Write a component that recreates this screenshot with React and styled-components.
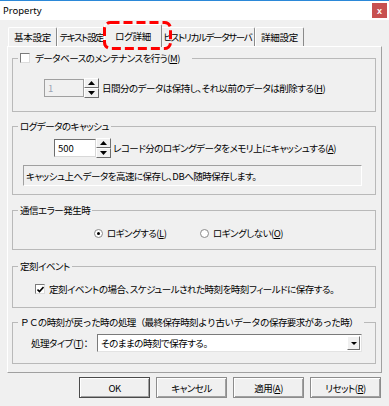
import React from "react";
import styled, { createGlobalStyle } from "styled-components";

const Global = createGlobalStyle`
  html, body { margin: 0; padding: 0; background: #f0f0f0; }
  body {
    font-family: "Noto Sans CJK JP", "Noto Sans", sans-serif;
    font-size: 9.5px;
    letter-spacing: -0.5px;
    color: #000;
    font-feature-settings: "palt" 1;
  }
  * { box-sizing: border-box; }
`;

const Window = styled.div`
  position: relative;
  width: 389px;
  height: 406px;
  overflow: hidden;
  background: #f0f0f0;
`;

const TitleBar = styled.div`
  height: 20px;
  background: #fff;
  border-top: 1px solid #2b88d8;
  display: flex;
  align-items: center;
  justify-content: space-between;
  padding: 0 2px 0 3px;
`;

const Title = styled.span`
  font-family: "Noto Sans", sans-serif;
  font-size: 9.5px;
  letter-spacing: 0;
  color: #000;
`;

const CloseBtn = styled.div`
  width: 15px;
  height: 15px;
  background: #c75050;
  color: #fff;
  display: flex;
  align-items: center;
  justify-content: center;
  font: bold 9px "Liberation Sans", sans-serif;
  letter-spacing: 0;
`;

const TabStrip = styled.div`
  height: 26px;
  display: flex;
  align-items: flex-end;
  padding-left: 8px;
`;

const Tab = styled.div`
  position: relative;
  z-index: ${(p) => (p.$active ? 2 : 1)};
  width: ${(p) => p.$w}px;
  height: ${(p) => (p.$active ? 23 : 19)}px;
  margin: 0 ${(p) => (p.$active ? -2 : 0)}px ${(p) => (p.$active ? -1 : 0)}px;
  background: #f0f0f0;
  border-top: 1px solid #fff;
  border-left: 1px solid #fff;
  border-right: 1px solid #8a8a8a;
  border-radius: 2px 2px 0 0;
  display: flex;
  align-items: center;
  justify-content: center;
  white-space: nowrap;
  letter-spacing: ${(p) => p.$ls ?? -0.3}px;
`;

const Panel = styled.div`
  margin-left: 7px;
  width: 375px;
  height: 327px;
  border-style: solid;
  border-width: 1px;
  border-color: #fff #a0a0a0 #a0a0a0 #fff;
  padding: 4px 5px 0 4px;
`;

const Group = styled.fieldset`
  margin: ${(p) => p.$mt}px 0 0 0;
  padding: 0 0 ${(p) => p.$pb}px 0;
  border: 1px solid #b9b9b9;
  min-width: 0;
`;

const Legend = styled.legend`
  margin-left: 5px;
  padding: 0 2px;
  height: 14px;
  line-height: 14px;
  display: flex;
  align-items: center;
  gap: 5px;
  white-space: nowrap;
  ${(p) => (p.$w ? `width: ${p.$w}px;` : "")}
  ${(p) =>
    p.$full
      ? `font-feature-settings: normal; letter-spacing: -0.6px; padding-right: 6px;`
      : ""}
`;

const Row = styled.div`
  display: flex;
  align-items: center;
  margin-top: ${(p) => p.$mt}px;
  margin-left: ${(p) => p.$ml}px;
  height: ${(p) => p.$h}px;
  white-space: nowrap;
`;

const NumInput = styled.div`
  width: ${(p) => p.$w}px;
  height: 18px;
  background: ${(p) => (p.$disabled ? "#f0f0f0" : "#fff")};
  color: ${(p) => (p.$disabled ? "#9aa4b4" : "#000")};
  border-style: solid;
  border-width: 1px;
  border-color: ${(p) =>
    p.$disabled ? "#a0a0a0" : "#6d6d6d #d8d8d8 #d8d8d8 #6d6d6d"};
  padding-left: 3px;
  display: flex;
  align-items: center;
  letter-spacing: 0;
`;

const Spin = styled.div`
  width: 15px;
  height: 20px;
  display: flex;
  flex-direction: column;
  margin-right: ${(p) => p.$mr}px;
`;

const SpinBtn = styled.div`
  flex: 1;
  background: #f0f0f0;
  border-style: solid;
  border-width: 1px;
  border-color: #fff #6d6d6d #6d6d6d #fff;
  display: flex;
  align-items: center;
  justify-content: center;
`;

const StaticBox = styled.div`
  margin-top: 7px;
  margin-left: 10px;
  width: 339px;
  height: 21px;
  border-style: solid;
  border-width: 1px;
  border-color: #a0a0a0 #fff #fff #a0a0a0;
  padding-left: 2px;
  display: flex;
  align-items: center;
  white-space: nowrap;
`;

const CheckBox = styled.span`
  width: 10px;
  height: 10px;
  flex: none;
  background: #fff;
  border-style: solid;
  border-width: 1px;
  border-color: #7a7a7a #dcdcdc #dcdcdc #7a7a7a;
  display: flex;
  align-items: center;
  justify-content: center;
  margin-right: ${(p) => p.$mr || 0}px;
`;

const RadioItem = styled.label`
  display: flex;
  align-items: center;
  width: ${(p) => p.$w}px;
  white-space: nowrap;
`;

const RadioCircle = styled.span`
  width: 9px;
  height: 9px;
  flex: none;
  border-radius: 50%;
  background: #fff;
  border: 1px solid #8a8a8a;
  margin-right: 4px;
  display: flex;
  align-items: center;
  justify-content: center;
  &::after {
    content: "";
    width: 3px;
    height: 3px;
    border-radius: 50%;
    background: ${(p) => (p.$on ? "#000" : "transparent")};
  }
`;

const FieldLabel = styled.span`
  width: 66px;
  flex: none;
  white-space: nowrap;
`;

const Combo = styled.div`
  width: 265px;
  height: 18px;
  background: #fff;
  border-style: solid;
  border-width: 1px;
  border-color: #7a7a7a #e3e3e3 #e3e3e3 #7a7a7a;
  display: flex;
  align-items: center;
  justify-content: space-between;
  padding: 1px 1px 1px 3px;
`;

const ComboBtn = styled.div`
  width: 13px;
  height: 14px;
  background: #f0f0f0;
  border-style: solid;
  border-width: 1px;
  border-color: #fff #6d6d6d #6d6d6d #fff;
  display: flex;
  align-items: center;
  justify-content: center;
`;

const U = styled.span`
  text-decoration: underline;
`;

const ButtonRow = styled.div`
  display: flex;
  justify-content: flex-end;
  gap: 6px;
  margin-top: 4px;
  padding-right: 8px;
`;

const Button = styled.button`
  width: 71px;
  height: 21px;
  margin: 0;
  padding: 0;
  font: inherit;
  letter-spacing: inherit;
  font-feature-settings: "palt" 1;
  color: #000;
  background: #f0f0f0;
  border: 1px solid ${(p) => (p.$default ? "#4a4a4a" : "#8c8c8c")};
  box-shadow: inset 1px 1px #fff, inset -1px -1px #a0a0a0;
  display: flex;
  align-items: center;
  justify-content: center;
`;

const Highlight = styled.svg`
  position: absolute;
  left: 103px;
  top: 21px;
  width: 69px;
  height: 29px;
  pointer-events: none;
  z-index: 5;
`;

const Tri = ({ down, w = 7, h = 4 }) => (
  <svg width={w} height={h} viewBox={`0 0 ${w} ${h}`}>
    <polygon
      points={down ? `0,0 ${w},0 ${w / 2},${h}` : `0,${h} ${w},${h} ${w / 2},0`}
      fill="#000"
    />
  </svg>
);

const Check = () => (
  <svg width="7" height="7" viewBox="0 0 7 7">
    <path d="M0.5 3.5 L2.5 5.5 L6.5 1" stroke="#000" strokeWidth="1.6" fill="none" />
  </svg>
);

const SpinControl = ({ mr }) => (
  <Spin $mr={mr}>
    <SpinBtn>
      <Tri />
    </SpinBtn>
    <SpinBtn>
      <Tri down />
    </SpinBtn>
  </Spin>
);

export default function App() {
  return (
    <>
      <Global />
      <Window>
        <TitleBar>
          <Title>Property</Title>
          <CloseBtn>x</CloseBtn>
        </TitleBar>
        <TabStrip>
          <Tab $w={49}>基本設定</Tab>
          <Tab $w={49} $ls={-1.4}>テキスト設定</Tab>
          <Tab $w={58} $active>ログ詳細</Tab>
          <Tab $w={95} $ls={-1.3}>ヒストリカルデータサーバ</Tab>
          <Tab $w={49}>詳細設定</Tab>
        </TabStrip>
        <Panel>
          <Group $mt={0} $pb={13}>
            <Legend $w={174}>
              <CheckBox />
              <span>
                データベースのメンテナンスを行う(<U>M</U>)
              </span>
            </Legend>
            <Row $mt={13} $ml={31} $h={20}>
              <NumInput $w={40} $disabled>1</NumInput>
              <SpinControl mr={3} />
              <span>
                日間分のデータは保持し、それ以前のデータは削除する(<U>H</U>)
              </span>
            </Row>
          </Group>

          <Group $mt={7} $pb={8}>
            <Legend>ログデータのキャッシュ</Legend>
            <Row $mt={5} $ml={41} $h={20}>
              <NumInput $w={42}>500</NumInput>
              <SpinControl mr={2} />
              <span>
                レコード分のロギングデータをメモリ上にキャッシュする(<U>A</U>)
              </span>
            </Row>
            <StaticBox>キャッシュ上へデータを高速に保存し、DBへ随時保存します。</StaticBox>
          </Group>

          <Group $mt={8} $pb={9}>
            <Legend>通信エラー発生時</Legend>
            <Row $mt={9} $ml={81} $h={14}>
              <RadioItem $w={106}>
                <RadioCircle $on />
                <span>
                  ロギングする(<U>L</U>)
                </span>
              </RadioItem>
              <RadioItem $w={120}>
                <RadioCircle />
                <span>
                  ロギングしない(<U>O</U>)
                </span>
              </RadioItem>
            </Row>
          </Group>

          <Group $mt={9} $pb={11}>
            <Legend>定刻イベント</Legend>
            <Row $mt={9} $ml={22} $h={14}>
              <CheckBox $mr={4}>
                <Check />
              </CheckBox>
              <span>定刻イベントの場合、スケジュールされた時刻を時刻フィールドに保存する。</span>
            </Row>
          </Group>

          <Group $mt={7} $pb={11}>
            <Legend $full>
              ＰＣの時刻が戻った時の処理（最終保存時刻より古いデータの保存要求があった時）
            </Legend>
            <Row $mt={5} $ml={18} $h={18}>
              <FieldLabel>
                処理タイプ(<U>T</U>)：
              </FieldLabel>
              <Combo>
                <span>そのままの時刻で保存する。</span>
                <ComboBtn>
                  <Tri down w={6} h={3} />
                </ComboBtn>
              </Combo>
            </Row>
          </Group>
        </Panel>
        <ButtonRow>
          <Button $default>OK</Button>
          <Button>キャンセル</Button>
          <Button>
            適用(<U>A</U>)
          </Button>
          <Button>
            リセット(<U>R</U>)
          </Button>
        </ButtonRow>
        <Highlight viewBox="0 0 69 29">
          <rect
            x="1.5"
            y="1.5"
            width="66"
            height="26"
            rx="6"
            ry="6"
            fill="none"
            stroke="#ff0000"
            strokeWidth="3"
            strokeDasharray="9 4"
          />
        </Highlight>
      </Window>
    </>
  );
}
